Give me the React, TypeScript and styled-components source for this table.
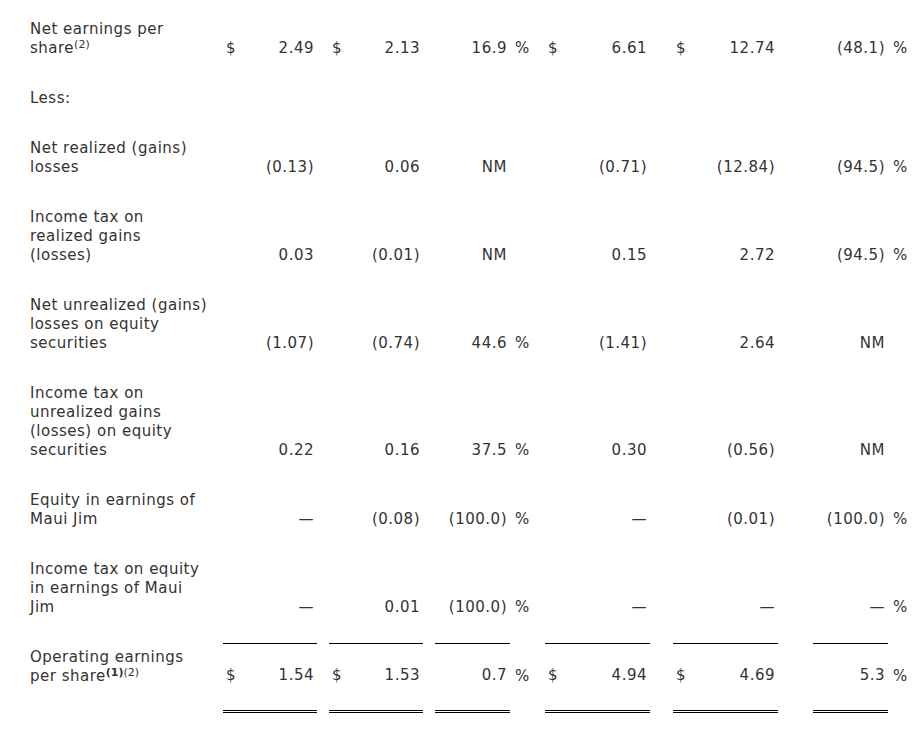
import React from 'react'
import styled, { createGlobalStyle } from 'styled-components'

const GlobalStyle = createGlobalStyle`
    body {
        margin: 0;
        background: #ffffff;
    }
`
const Page = styled.div`
    padding: 17px 0 0 30px;
    font-family: "DejaVu Sans", Verdana, sans-serif;
    font-size: 15px;
    line-height: 19px;
    letter-spacing: 0.5px;
    color: #333333;
`
const Table = styled.table`
    table-layout: fixed;
    border-collapse: collapse;
    width: 880px;
`
const Tr = styled.tr<{ $top?: number, $bottom?: number }>`
    & > td {
        padding-top: ${p => p.$top ?? 3}px;
        padding-bottom: ${p => p.$bottom ?? 28}px;
    }
`
const Td = styled.td<{ $rule?: 'single' | 'double' }>`
    padding: 0;
    vertical-align: bottom;
    border-bottom: ${p => p.$rule === 'single' ? '1px solid #000' : p.$rule === 'double' ? '3px double #000' : 'none'};
`
const Label = styled(Td)`
    padding-right: 10px;
    text-align: left;
    white-space: nowrap;
`
const LabelLine = styled.div``
const Currency = styled(Td)`
    padding-left: 3px;
    text-align: left;
`
const Value = styled(Td)`
    padding-right: 3px;
    text-align: right;
    white-space: nowrap;
`
const Sign = styled(Td)`
    padding-left: 5px;
    text-align: left;
`
const Sup = styled.sup<{ $bold?: boolean }>`
    font-size: 11px;
    line-height: 0;
    letter-spacing: 0;
    vertical-align: 5px;
    font-weight: ${p => p.$bold ? 700 : 400};
`

type Rule = 'single' | 'double' | undefined
type RowData = {
    label: React.ReactNode[]
    cur?: boolean
    v?: string[]
    pctSign?: [boolean, boolean]
    rule?: Rule
    top?: number
    bottom?: number
}

const rows: RowData[] = [
    { label: ['Net earnings per', <>share<Sup>(2)</Sup></>], cur: true, v: ['2.49', '2.13', '16.9', '6.61', '12.74', '(48.1)'], pctSign: [true, true] },
    { label: ['Less:'] },
    { label: ['Net realized (gains)', 'losses'], v: ['(0.13)', '0.06', 'NM', '(0.71)', '(12.84)', '(94.5)'], pctSign: [false, true] },
    { label: ['Income tax on', 'realized gains', '(losses)'], v: ['0.03', '(0.01)', 'NM', '0.15', '2.72', '(94.5)'], pctSign: [false, true] },
    { label: ['Net unrealized (gains)', 'losses on equity', 'securities'], v: ['(1.07)', '(0.74)', '44.6', '(1.41)', '2.64', 'NM'], pctSign: [true, false] },
    { label: ['Income tax on', 'unrealized gains', '(losses) on equity', 'securities'], v: ['0.22', '0.16', '37.5', '0.30', '(0.56)', 'NM'], pctSign: [true, false] },
    { label: ['Equity in earnings of', 'Maui Jim'], v: ['—', '(0.08)', '(100.0)', '—', '(0.01)', '(100.0)'], pctSign: [true, true] },
    { label: ['Income tax on equity', 'in earnings of Maui', 'Jim'], v: ['—', '0.01', '(100.0)', '—', '—', '—'], pctSign: [true, true], rule: 'single', bottom: 26 },
    { label: ['Operating earnings', <>per share<Sup $bold>(1)</Sup><Sup>(2)</Sup></>], cur: true, v: ['1.54', '1.53', '0.7', '4.94', '4.69', '5.3'], pctSign: [true, true], rule: 'double', top: 5, bottom: 25 },
]

// column widths, left to right
const widths = [193, 20, 74, 12, 20, 74, 12, 75, 22, 13, 20, 85, 23, 20, 85, 35, 75, 22]

const Money = ({ cur, v, rule }: { cur?: boolean, v: string, rule: Rule }) => (
    <>
        <Currency $rule={rule}>{cur ? '$' : ''}</Currency>
        <Value $rule={rule}>{v}</Value>
    </>
)

const Pct = ({ v, sign, rule }: { v: string, sign: boolean, rule: Rule }) => (
    <>
        <Value $rule={rule}>{v}</Value>
        <Sign>{sign ? '%' : ''}</Sign>
    </>
)

const Row = ({ label, cur, v, pctSign, rule, top, bottom }: RowData) => {
    const text = <Label>{label.map((l, i) => <LabelLine key={i}>{l}</LabelLine>)}</Label>
    if (!v) {
        return (
            <Tr $top={top} $bottom={bottom}>
                {text}
                <Td colSpan={17} />
            </Tr>
        )
    }
    const [s1, s2] = pctSign || [false, false]
    return (
        <Tr $top={top} $bottom={bottom}>
            {text}
            <Money cur={cur} v={v[0]} rule={rule} />
            <Td />
            <Money cur={cur} v={v[1]} rule={rule} />
            <Td />
            <Pct v={v[2]} sign={s1} rule={rule} />
            <Td />
            <Money cur={cur} v={v[3]} rule={rule} />
            <Td />
            <Money cur={cur} v={v[4]} rule={rule} />
            <Td />
            <Pct v={v[5]} sign={s2} rule={rule} />
        </Tr>
    )
}

const App = () => {
    return (
        <Page>
            <GlobalStyle />
            <Table>
                <colgroup>
                    {widths.map((w, i) => <col key={i} style={{ width: w }} />)}
                </colgroup>
                <tbody>
                    {rows.map((r, i) => <Row key={i} {...r} />)}
                </tbody>
            </Table>
        </Page>
    )
}

export default App
